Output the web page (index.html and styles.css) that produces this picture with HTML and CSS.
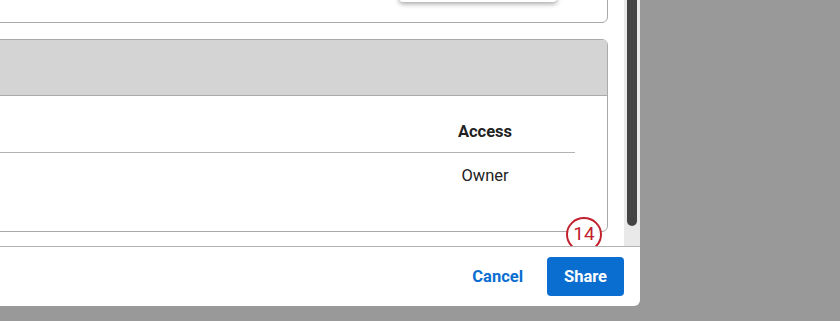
FILE: index.html
```html
<!DOCTYPE html>
<html lang="en">
<head>
	<meta charset="UTF-8">
	<title>Share</title>
	<link rel="stylesheet" href="styles.css">
</head>
<body>
	<div class="dialog">
		<div class="body">
			<div class="content">
				<div class="card top-card">
					<div class="menu-btn"></div>
				</div>
				<div class="card users">
					<div class="card-head"></div>
					<table class="tbl">
						<tr><th class="name"></th><th class="access">Access</th></tr>
						<tr><td class="name"></td><td class="access">Owner</td></tr>
					</table>
				</div>
				<span class="badge">14</span>
			</div>
			<div class="scroll"><div class="thumb"></div></div>
		</div>
		<div class="foot">
			<button class="btn cancel">Cancel</button>
			<button class="btn share">Share</button>
		</div>
	</div>
</body>
</html>
```

FILE: styles.css
```css
*{
	margin: 0;
	padding: 0;
	box-sizing: border-box;
}
body{
	background: #999;
	font-family: Roboto, "Liberation Sans", sans-serif;
	color: #222;
	height: 321px;
	overflow: hidden;
}
.dialog{
	width: 640px;
	height: 306px;
	background: #fff;
	border-bottom-right-radius: 6px;
	overflow: hidden;
}
.body{
	display: flex;
	height: 247px;
	border-bottom: 1px solid #b3b3b3;
}
.content{
	flex: 1;
	position: relative;
	padding-right: 16px;
	overflow: hidden;
}
.card{
	margin-left: -20px;
	border: 1px solid #aaa;
	border-radius: 6px;
	background: #fff;
}
.top-card{
	height: 60px;
	margin-top: -37px;
	display: flex;
	justify-content: flex-end;
	padding-right: 50px;
}
.menu-btn{
	width: 158px;
	height: 38px;
	background: #fff;
	border-radius: 4px;
	box-shadow: 0 2px 5px rgba(0,0,0,.35);
}
.users{
	margin-top: 16px;
	height: 193px;
	overflow: hidden;
}
.card-head{
	height: 56px;
	background: #d4d4d4;
	border-bottom: 1px solid #aaa;
}
.tbl{
	width: calc(100% - 32px);
	border-collapse: collapse;
	font-size: 16.5px;
}
.tbl th{
	font-weight: bold;
	height: 56px;
	padding-top: 16px;
	border-bottom: 1px solid #b3b3b3;
}
.tbl td{
	height: 46px;
	padding-bottom: 0;
}
.tbl .access{
	width: 180px;
	text-align: center;
}
.badge{
	position: absolute;
	left: 566px;
	top: 217px;
	width: 36px;
	height: 35px;
	border: 2.5px solid #c3202e;
	border-radius: 50%;
	background: #fff;
	color: #c3202e;
	font-size: 19px;
	line-height: 30px;
	text-align: center;
}
.scroll{
	width: 16px;
	background: #e9e9e9;
	padding-left: 3px;
}
.thumb{
	width: 10px;
	height: 226px;
	background: #444;
	border-radius: 0 0 5px 5px;
}
.foot{
	display: flex;
	justify-content: flex-end;
	align-items: center;
	gap: 24px;
	height: 59px;
	padding-right: 16px;
}
.btn{
	border: 0;
	font-family: inherit;
	font-size: 16.5px;
	font-weight: bold;
	background: none;
	cursor: pointer;
}
.cancel{
	color: #0a6ed1;
}
.share{
	width: 77px;
	height: 39px;
	border-radius: 4px;
	background: #0a6ed1;
	color: #fff;
}
```
